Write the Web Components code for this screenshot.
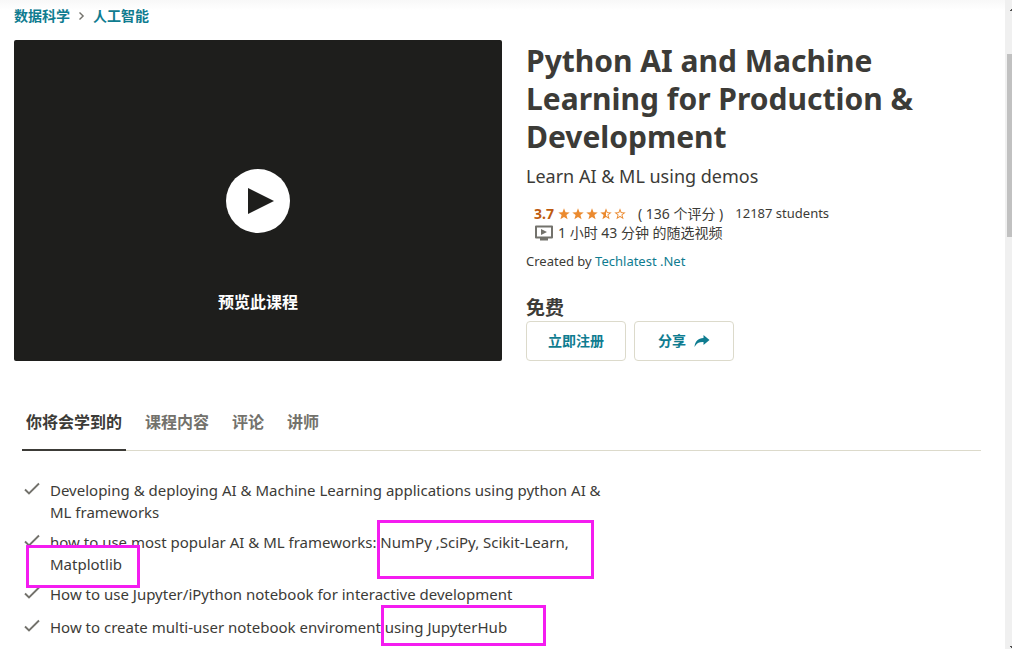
<!DOCTYPE html>
<html lang="zh-CN">
<head>
<meta charset="utf-8">
<title>Python AI and Machine Learning for Production &amp; Development</title>
<style>
  html { height: 100%; }
  body {
    margin: 0; height: 100%; overflow: hidden; background: #fff; color: #3c3b37;
    font-family: "Noto Sans", "Noto Sans CJK SC", sans-serif; font-size: 14px;
  }
</style>
</head>
<body>
<course-page></course-page>

<script>
const define = (name, html, setup) => {
  const template = document.createElement('template');
  template.innerHTML = html;
  customElements.define(name, class extends HTMLElement {
    constructor() {
      super();
      this.attachShadow({ mode: 'open' }).append(template.content.cloneNode(true));
    }
    connectedCallback() { if (setup) setup(this, this.shadowRoot); }
  });
};

define('bread-crumbs', `
<style>
  :host { display: block; }
  nav { display: flex; align-items: center; height: 20px; line-height: 20px; gap: 8px; font-weight: 700; }
  ::slotted(a) { color: #0f7c90; text-decoration: none; }
  svg { width: 7px; height: 8px; }
</style>
<nav aria-label="breadcrumb">
  <slot name="parent"></slot>
  <svg viewBox="0 0 7 8" fill="none" stroke="#73726c" stroke-width="1.4"><path d="M1.500 .5 5.100 4 1.500 7.500"/></svg>
  <slot name="current"></slot>
</nav>`);

define('video-preview', `
<style>
  :host { display: block; }
  button {
    display: flex; flex-direction: column; align-items: center; justify-content: flex-end; gap: 56px;
    width: 100%; height: 321px; padding: 0 0 46px; border: 0; border-radius: 2px;
    background: #1e1e1c; color: #fff; font: 700 16px/26px "Noto Sans", "Noto Sans CJK SC", sans-serif;
  }
  svg { width: 64px; height: 64px; }
</style>
<button type="button">
  <svg viewBox="0 0 64 64"><circle cx="32" cy="32" r="32" fill="#fff"/><path d="M22 19v26l26-13z" fill="#1e1e1c"/></svg>
  <span><slot></slot></span>
</button>`);

define('star-rating', `
<style>
  :host { display: inline-flex; gap: 2px; }
  svg { width: 12px; height: 12px; }
</style>`, (host, root) => {
  const star = 'M6 .3 7.5 4.2 11.7 4.4 8.4 7 9.6 11.3 6 8.9 2.4 11.3 3.6 7 .3 4.4 4.5 4.2z';
  const inner = 'M6 3.1 6.9 5.1 9.2 5.3 7.4 6.7 8 9.2 6 7.8z';
  const inset = 'M6 3.1 6.9 5.1 9.2 5.3 7.4 6.7 8 9.2 6 7.8 4 9.2 4.6 6.7 2.8 5.3 5.1 5.1z';
  const value = Number(host.getAttribute('value'));
  for (let i = 0; i < 5; i++) {
    const rest = value - i;
    const cut = rest >= 1 ? '' : rest > 0 ? inner : inset;
    root.innerHTML += `<svg viewBox="0 0 12 12" aria-hidden="true"><path fill="#eb8a2f" fill-rule="evenodd" d="${star}${cut}"/></svg>`;
  }
});

define('outline-button', `
<style>
  :host { display: block; width: 100px; }
  button {
    display: flex; align-items: center; justify-content: center; gap: 8px;
    box-sizing: border-box; width: 100%; height: 40px; padding: 0;
    border: 1px solid #dcdacb; border-radius: 4px; background: #fff; color: #0f7c90;
    font: 700 14px/20px "Noto Sans", "Noto Sans CJK SC", sans-serif;
  }
</style>
<button type="button"><slot></slot><slot name="icon"></slot></button>`);

define('course-info', `
<style>
  :host { display: block; }
  h1 { margin: 2px 0 0; font-size: 30px; line-height: 38px; font-weight: 700; }
  .lead { margin: 7px 0 0; font-size: 18px; line-height: 26px; }
  .stats { margin: 15px 0 0; padding-left: 8px; line-height: 19px; font-size: 13px; }
  .row { display: flex; align-items: center; height: 19px; white-space: pre; }
  .score { font-size: 14px; color: #be5a0e; font-weight: 700; margin-right: 4px; }
  .count { margin: 0 12px; font-size: 14px; }
  .length { font-size: 14px; }
  .tv { width: 20px; height: 16px; margin-right: 4px; }
  .author { margin: 9px 0 0; line-height: 20px; font-size: 13px; }
  a { color: #0f7c90; text-decoration: none; }
  .price { margin: 24px 0 0; font-size: 19px; line-height: 26px; font-weight: 700; }
  .actions { display: flex; gap: 8px; }
  .share { width: 16px; height: 14px; }
</style>
<h1>Python AI and Machine Learning for Production &amp; Development</h1>
<p class="lead">Learn AI &amp; ML using demos</p>
<div class="stats">
  <div class="row"><span class="score">3.7</span><star-rating value="3.5"></star-rating><span class="count">( 136 个评分 )</span><span>12187 students</span></div>
  <div class="row"><svg class="tv" viewBox="0 0 20 16"><path d="M2 1.500h16v11H2z" fill="none" stroke="#73726c" stroke-width="2" stroke-linejoin="round"/><path d="M7 4v6l6-3zM6 12.500h8v3H6z" fill="#73726c"/></svg><span class="length">1 小时 43 分钟 的随选视频</span></div>
</div>
<p class="author">Created by <a href="#author">Techlatest .Net</a></p>
<p class="price">免费</p>
<div class="actions">
  <outline-button>立即注册</outline-button>
  <outline-button>分享<svg slot="icon" class="share" viewBox="0 0 16 14"><path d="M9.500 1 15.500 6 9.500 11V8C5.500 7.800 2.500 9 .5 13 1 7.500 4 4.300 9.500 4z" fill="#0f7c90"/></svg></outline-button>
</div>`);

define('section-tabs', `
<style>
  :host { display: block; }
  nav { display: flex; gap: 15px; border-bottom: 1px solid #dcdacb; }
  ::slotted(a) {
    padding: 0 4px 15px; margin-bottom: -1px; border-bottom: 2px solid transparent;
    color: #73726c; text-decoration: none; font-size: 16px; line-height: 24px; font-weight: 700;
  }
  ::slotted(a[aria-current]) { color: #3c3b37; border-color: #3c3b37; }
</style>
<nav><slot></slot></nav>`);

define('learn-item', `
<style>
  :host { display: flex; gap: 10px; min-height: 25px; font-size: 15px; line-height: 22px; }
  svg { flex: none; width: 16px; height: 22px; }
</style>
<svg viewBox="0 0 16 22" fill="none" stroke="#73726c" stroke-width="1.9"><path d="M1 10.500 5 14.500 15 4.500"/></svg>
<span><slot></slot></span>`);

define('mark-box', `
<style>
  :host { position: absolute; box-sizing: border-box; border: 3px solid #f41cf0; pointer-events: none; }
</style>`);

define('scroll-rail', `
<style>
  :host { display: flex; flex-direction: column; justify-content: space-between; width: 7px; background: #f0f0f0; }
  svg { display: block; width: 7px; height: 12px; }
  .end { height: 3px; }
  .track { flex: 1; padding: 42px 0 0 2px; }
  .thumb { height: 183px; background: #c1c1c1; }
</style>
<svg viewBox="0 0 7 12"><path d="M5 11V10H6V9H7V11z" fill="#505050"/></svg>
<div class="track"><div class="thumb"></div></div>
<svg class="end" viewBox="0 0 7 3"><path d="M5 0H7V2H6V1H5z" fill="#505050"/></svg>`);

define('course-page', `
<style>
  :host { display: flex; height: 100%; }
  main { flex: 1; min-width: 0; padding: 6px 15px 0 14px; background: linear-gradient(#f8f8f8, #fff 10px); overflow: hidden; }
  .hero { display: grid; grid-template-columns: 1fr 1fr; margin-top: 14px; }
  course-info { padding-left: 24px; }
  section-tabs { margin: 49px 9px 0 8px; }
  .learn { position: relative; display: flex; flex-direction: column; gap: 8px; width: 600px; margin: 28px 0 0 10px; }
  .libs { left: 353px; top: 41px; width: 217px; height: 59px; }
  .plot { left: 2px; top: 66px; width: 114px; height: 43px; }
  .hub { left: 357px; top: 126px; width: 165px; height: 41px; }
</style>
<main>
  <bread-crumbs><a slot="parent" href="#data">数据科学</a><a slot="current" href="#ai">人工智能</a></bread-crumbs>
  <div class="hero">
    <video-preview>预览此课程</video-preview>
    <course-info></course-info>
  </div>
  <section-tabs>
    <a href="#learn" aria-current="true">你将会学到的</a><a href="#content">课程内容</a><a href="#reviews">评论</a><a href="#teacher">讲师</a>
  </section-tabs>
  <div class="learn">
    <learn-item>Developing &amp; deploying AI &amp; Machine Learning applications using python AI &amp; ML frameworks</learn-item>
    <learn-item>how to use most popular AI &amp; ML frameworks: NumPy ,SciPy, Scikit-Learn, Matplotlib</learn-item>
    <learn-item>How to use Jupyter/iPython notebook for interactive development</learn-item>
    <learn-item>How to create multi-user notebook enviroment using JupyterHub</learn-item>
    <mark-box class="libs"></mark-box>
    <mark-box class="plot"></mark-box>
    <mark-box class="hub"></mark-box>
  </div>
</main>
<scroll-rail></scroll-rail>`);
</script>
</body>
</html>
